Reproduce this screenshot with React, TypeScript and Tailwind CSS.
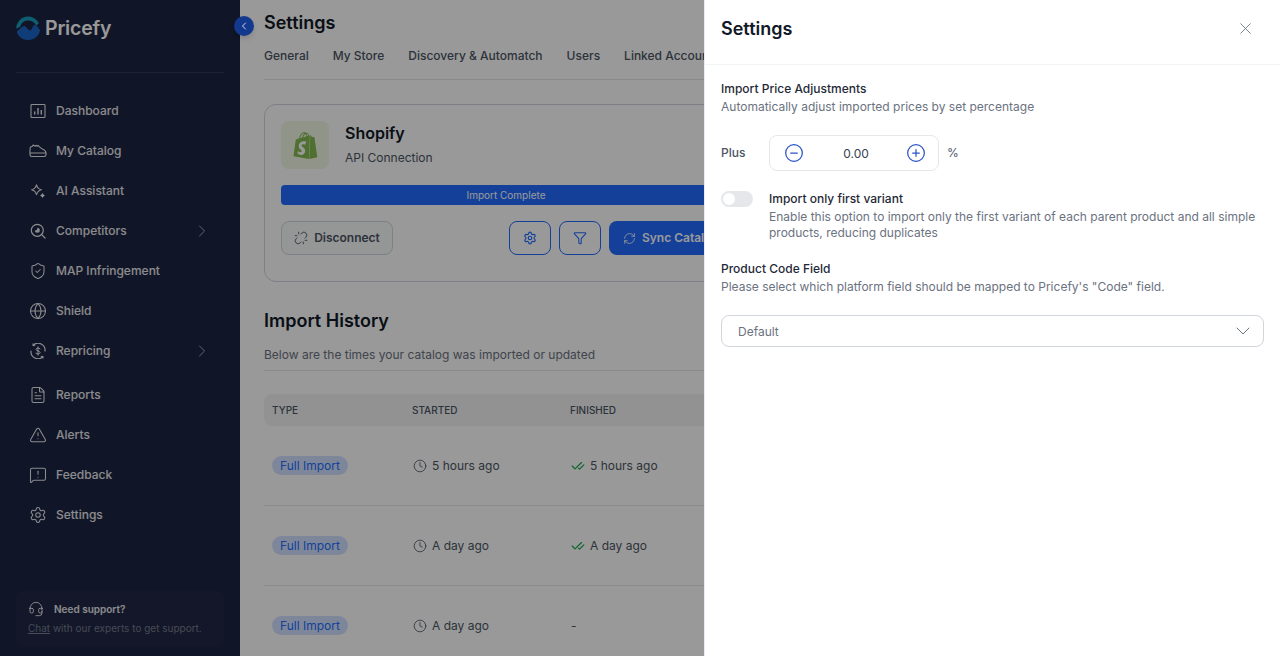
import React from "react";
import {
  ChevronLeft, ChevronRight, ChevronDown, X, CircleMinus, CirclePlus, Clock, CheckCheck, Settings, Filter, RefreshCw, Unlink,
  ShieldCheck, Globe, FileText, TriangleAlert, MessageSquareWarning, Headset,
} from "lucide-react";
import { SiShopify } from "react-icons/si";

const DashboardIcon = () => (
  <svg viewBox="0 0 16 16" className="h-[16px] w-[16px] shrink-0" fill="none" stroke="currentColor" strokeWidth="1.1">
    <rect x="1" y="1.500" width="14" height="13" rx="0.8" />
    <path d="M4.700 11.500V8.500M8 11.500V5M11.300 11.500V7" strokeWidth="1.4" />
  </svg>
);
const CatalogIcon = () => (
  <svg viewBox="0 0 18 14" className="h-[14px] w-[18px] shrink-0" fill="none" stroke="currentColor" strokeWidth="1.1" strokeLinejoin="round">
    <path d="M1 9c-.2-2 0-4.200.4-6 1.200 0 2.200-.6 2.800-2l2 1.200.9-.9 1.300 1 .8-.8c1 1.300 2.600 3 4.600 3.700 1.900.7 3 1.700 3.200 3.800z" />
    <path d="M1 9v1.800c0 1 .8 1.700 1.800 1.700h12.400c1 0 1.800-.7 1.800-1.700V9" />
  </svg>
);
const AiIcon = () => (
  <svg viewBox="0 0 16 16" className="h-[16px] w-[16px] shrink-0" fill="none" stroke="currentColor" strokeWidth="1.1" strokeLinejoin="round">
    <path d="M6.500 1.800c.7 2.700 2.200 4.200 4.900 4.900-2.700.7-4.200 2.200-4.900 4.900-.7-2.700-2.200-4.200-4.900-4.900 2.700-.7 4.200-2.200 4.900-4.900z" />
    <path d="M12.500 10.800c.2 1 .7 1.500 1.700 1.700-1 .2-1.500.7-1.700 1.700-.2-1-.7-1.500-1.700-1.700 1-.2 1.500-.7 1.700-1.700z" fill="currentColor" />
  </svg>
);
const CompetitorIcon = () => (
  <svg viewBox="0 0 16 16" className="h-[16px] w-[16px] shrink-0" fill="none" stroke="currentColor" strokeWidth="1.2">
    <circle cx="7.300" cy="7.300" r="6" />
    <path d="M4.800 7.300a2.500 2.500 0 1 0 2.500-2.500 2 2 0 0 1-2.500 2.500z" fill="currentColor" stroke="none" />
    <path d="M11.700 11.700l3.300 3.300" strokeLinecap="round" />
  </svg>
);
const RepriceIcon = () => (
  <svg viewBox="0 0 16 16" className="h-[16px] w-[16px] shrink-0" fill="none" stroke="currentColor" strokeWidth="1.2" strokeLinecap="round">
    <path d="M3.200 2.200A7 7 0 0 1 15 8M12.800 13.800A7 7 0 0 1 1 8" />
    <path d="M3 .800v1.800h1.800M13 15.200v-1.800h-1.800" strokeWidth="1" />
    <path d="M10 5.800C8.800 4.600 6 4.800 6 6.500s4.100 1.200 4.100 3-3 1.900-4.200.7M8 3.800v8.400" strokeWidth="1" />
  </svg>
);

const Logo = () => (
  <svg viewBox="0 0 24 24" className="h-[24px] w-[24px] shrink-0">
    <path d="M0.200 12.800A12 12 0 0 1 23 7.300L20.300 9.600C18.700 6.500 15.500 4.600 12 4.600 8 4.600 5 7.200 4.300 10.700Z" fill="#1a9cbc" />
    <path d="M0.700 16C3 13.500 6 10.500 8.300 10 10 9.700 12 14.500 14 14.500 16 14.500 16.800 8.800 18.700 8.700 20.300 8.700 22.300 11.500 24 14 23.500 20 18 24 12 24 6.500 24 2.500 20.500 0.700 16Z" fill="#1c66c9" />
  </svg>
);

const nav = [
  { label: "Dashboard", icon: <DashboardIcon /> },
  { label: "My Catalog", icon: <CatalogIcon /> },
  { label: "AI Assistant", icon: <AiIcon /> },
  { label: "Competitors", icon: <CompetitorIcon />, chevron: true },
  { label: "MAP Infringement", icon: <ShieldCheck size={18} strokeWidth={1.4} className="shrink-0" /> },
  { label: "Shield", icon: <Globe size={18} strokeWidth={1.4} className="shrink-0" /> },
  { label: "Repricing", icon: <RepriceIcon />, chevron: true },
  { label: "Reports", icon: <FileText size={18} strokeWidth={1.4} className="shrink-0" />, gap: true },
  { label: "Alerts", icon: <TriangleAlert size={18} strokeWidth={1.4} className="shrink-0" /> },
  { label: "Feedback", icon: <MessageSquareWarning size={18} strokeWidth={1.4} className="shrink-0" /> },
  { label: "Settings", icon: <Settings size={18} strokeWidth={1.4} className="shrink-0" /> },
];

const rows = [
  { started: "5 hours ago", finished: "5 hours ago", done: true },
  { started: "A day ago", finished: "A day ago", done: true },
  { started: "A day ago", finished: "-", done: false },
];

export default function App() {
  return (
    <div className="relative flex h-screen overflow-hidden bg-white font-['Inter',sans-serif]">
      <aside className="flex w-[240px] shrink-0 flex-col bg-[#1c2342] px-4">
        <div className="flex h-[73px] items-start border-b border-white/10 pt-[16px]">
          <Logo />
          <span className="ml-[5px] text-[19.500px] font-semibold leading-6 tracking-[-0.2px] text-white">Pricefy</span>
        </div>
        <nav className="mt-[18px] flex flex-col px-[14px]">
          {nav.map((n) => (
            <div key={n.label} className={`flex h-10 items-center text-[12px] font-medium text-white/90 ${n.gap ? "mt-1" : ""}`}>
              <span className="mr-[10px] flex w-4 shrink-0 items-center justify-center">{n.icon}</span>
              <span className="flex-1">{n.label}</span>
              {n.chevron && <ChevronRight size={20} strokeWidth={1.2} className="mr-[-2px] text-white/60" />}
            </div>
          ))}
        </nav>
        <div className="mb-[9px] mt-auto rounded-lg bg-white/[0.02] px-3 py-[11px]">
          <div className="flex items-center gap-[10px] text-[10px] font-semibold leading-[16px] text-white/90">
            <Headset size={16} strokeWidth={1.4} />
            <span>Need support?</span>
          </div>
          <div className="mt-[3px] whitespace-nowrap text-[10px] leading-[16px] text-white/40">
            <span className="underline">Chat</span> with our experts to get support.
          </div>
        </div>
      </aside>

      <main className="min-w-0 flex-1 overflow-hidden px-6">
        <h1 className="mt-[12px] text-[18px] font-semibold leading-[22px] text-[#111827]">Settings</h1>
        <div className="mt-[12px] flex h-[34px] gap-6 whitespace-nowrap border-b border-gray-200 text-[12px] font-medium leading-[20px] text-[#4b5563]">
          <span>General</span>
          <span>My Store</span>
          <span>Discovery &amp; Automatch</span>
          <span>Users</span>
          <span>Linked Accounts</span>
          <span>Integrations</span>
        </div>

        <section className="mt-6 w-[484px] rounded-xl border border-gray-300 px-4 pb-[26px] pt-4">
          <div className="flex gap-4">
            <div className="flex h-12 w-12 items-center justify-center rounded-lg bg-[#f0f7e4]">
              <span className="relative flex">
                <span className="absolute left-[7px] top-[9px] h-[14px] w-[13px] bg-white" />
                <SiShopify size={27} className="relative text-[#86bb52]" />
              </span>
            </div>
            <div>
              <div className="mt-[2px] text-[16px] font-semibold leading-[20px] text-[#111827]">Shopify</div>
              <div className="mt-[7px] text-[12px] leading-[16px] text-[#4b5563]">API Connection</div>
            </div>
          </div>
          <div className="mt-4 flex h-5 items-center justify-center rounded bg-[#226cff] text-[10px] text-white">Import Complete</div>
          <div className="mt-4 flex h-[34px] items-stretch gap-2">
            <button className="mr-auto flex w-[112px] items-center justify-center gap-[6px] rounded-lg border border-gray-300 bg-gray-50 text-[12px] font-semibold text-[#4b5563]">
              <Unlink size={14} strokeWidth={1.5} />
              Disconnect
            </button>
            <button className="flex w-[42px] items-center justify-center rounded-lg border border-[#226cff] text-[#226cff]">
              <Settings size={14} strokeWidth={2} />
            </button>
            <button className="flex w-[42px] items-center justify-center rounded-lg border border-[#226cff] text-[#226cff]">
              <Filter size={14} strokeWidth={1.8} />
            </button>
            <button className="flex w-[122px] items-center justify-center gap-[6px] whitespace-nowrap rounded-lg bg-[#226cff] pl-[2px] text-[12px] font-semibold text-white">
              <RefreshCw size={13} strokeWidth={1.5} />
              Sync Catalog
            </button>
          </div>
        </section>

        <h2 className="mt-[27px] text-[18px] font-semibold leading-[24px] text-[#111827]">Import History</h2>
        <p className="mt-[13px] border-b border-gray-200 pb-[6px] text-[12px] leading-[18px] text-[#6b7280]">Below are the times your catalog was imported or updated</p>

        <div className="mt-[23px] grid h-8 grid-cols-[140px_158px_1fr] items-center rounded-lg bg-gray-100 px-2 text-[10px] font-medium text-[#4b5563]">
          <span>TYPE</span>
          <span>STARTED</span>
          <span>FINISHED</span>
        </div>
        {rows.map((r, i) => (
          <div key={i} className="grid h-20 grid-cols-[140px_158px_1fr] items-center border-b border-gray-200 px-2 text-[12px] text-[#4b5563]">
            <span className="flex h-[19px] w-[76px] items-center justify-center rounded-full bg-[#d3e1ff] text-[#226cff]">Full Import</span>
            <span className="flex items-center gap-[5px] pl-px">
              <Clock size={14} strokeWidth={1.4} />
              {r.started}
            </span>
            <span className="flex items-center gap-[5px] pl-px">
              {r.done && <CheckCheck size={14} strokeWidth={2} className="text-[#16a34a]" />}
              {r.finished}
            </span>
          </div>
        ))}
      </main>

      <div className="absolute inset-0 bg-black/40" />

      <button className="absolute left-[234px] top-[16px] flex h-5 w-5 items-center justify-center rounded-full bg-[#13398f] text-white/80 shadow-md">
        <ChevronLeft size={12} strokeWidth={2} />
      </button>

      <aside className="absolute bottom-0 right-0 top-0 w-[576px] border-l border-[#e6ecfb] bg-white text-[12px]">
        <header className="flex h-[65px] items-center justify-between border-b border-gray-100 pb-2 pl-4 pr-[25px]">
          <h2 className="text-[18px] font-semibold text-[#111827]">Settings</h2>
          <X size={19} strokeWidth={1.1} className="text-[#6b7280]" />
        </header>
        <div className="px-4 pt-[15px]">
          <div className="font-medium leading-[18px] text-[#1f2937]">Import Price Adjustments</div>
          <div className="leading-[18px] text-[#6b7280]">Automatically adjust imported prices by set percentage</div>

          <div className="mt-[19px] flex items-center">
            <span className="w-12 font-medium leading-[18px] text-[#4b5563]">Plus</span>
            <div className="flex h-9 w-[170px] items-center justify-between rounded-lg border border-gray-200 pl-[14px] pr-[12px] text-[#374151]">
              <CircleMinus size={20} strokeWidth={1.5} className="text-[#2a54c9]" />
              <span className="ml-[2px] mt-[2px]">0.00</span>
              <CirclePlus size={20} strokeWidth={1.5} className="text-[#2a54c9]" />
            </div>
            <span className="ml-2 text-[#4b5563]">%</span>
          </div>

          <div className="mt-[18px] flex gap-4">
            <span className="mt-[2px] flex h-4 w-8 shrink-0 items-center rounded-full bg-gray-200 pl-[2px]">
              <span className="h-3 w-3 rounded-full bg-white" />
            </span>
            <div className="mt-px">
              <div className="font-medium leading-[18px] text-[#1f2937]">Import only first variant</div>
              <div className="mt-px leading-4 text-[#6b7280]">Enable this option to import only the first variant of each parent product and all simple products, reducing duplicates</div>
            </div>
          </div>

          <div className="mt-[19px] font-medium leading-[18px] text-[#1f2937]">Product Code Field</div>
          <div className="leading-[18px] text-[#6b7280]">Please select which platform field should be mapped to Pricefy's "Code" field.</div>

          <div className="mt-[19px] flex h-8 items-center justify-between rounded-lg border border-gray-300 pl-4 pr-[8px] text-[#6b7280]">
            <span className="mt-[2px]">Default</span>
            <ChevronDown size={24} strokeWidth={1} className="text-[#6b7280]" />
          </div>
        </div>
      </aside>
    </div>
  );
}
